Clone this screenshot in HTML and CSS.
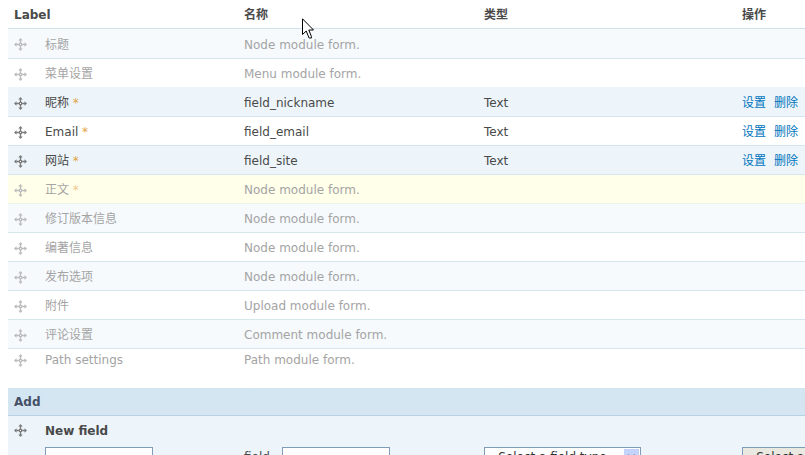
FILE: index.html
```html
<!DOCTYPE html>
<html lang="zh-CN">
<head>
<meta charset="utf-8">
<title>Manage fields</title>
<link rel="stylesheet" href="styles.css">
</head>
<body>
<svg class="defs" aria-hidden="true">
  <symbol id="move" viewBox="0 0 13 13">
    <path d="M6.500 1v11M1 6.500h11" stroke="currentColor" stroke-width="1.400" fill="none"/>
    <path d="M6.500 0l2.200 2.500H4.300zM6.500 13l2.200-2.500H4.300zM0 6.500l2.500-2.200v4.400zM13 6.500l-2.500-2.200v4.400z" fill="currentColor"/>
    <path d="M5 5h3v3H5z" fill="currentColor"/>
    <path d="M6 6h1v1H6z" fill="#fff"/>
  </symbol>
</svg>
<table class="fields">
  <colgroup><col class="c-label"><col class="c-name"><col class="c-type"><col></colgroup>
  <thead>
    <tr><th>Label</th><th>名称</th><th>类型</th><th>操作</th></tr>
  </thead>
  <tbody>
    <tr class="first tint locked"><td><div class="item"><svg><use href="#move"/></svg>标题</div></td><td>Node module form.</td><td></td><td></td></tr>
    <tr class="locked plain"><td><div class="item"><svg><use href="#move"/></svg>菜单设置</div></td><td>Menu module form.</td><td></td><td></td></tr>
    <tr class="odd"><td><div class="item"><svg><use href="#move"/></svg>昵称 <span class="req">*</span></div></td><td>field_nickname</td><td>Text</td><td class="ops"><a href="#">设置</a><a href="#">删除</a></td></tr>
    <tr><td><div class="item"><svg><use href="#move"/></svg>Email <span class="req">*</span></div></td><td>field_email</td><td>Text</td><td class="ops"><a href="#">设置</a><a href="#">删除</a></td></tr>
    <tr class="odd"><td><div class="item"><svg><use href="#move"/></svg>网站 <span class="req">*</span></div></td><td>field_site</td><td>Text</td><td class="ops"><a href="#">设置</a><a href="#">删除</a></td></tr>
    <tr class="changed locked"><td><div class="item"><svg><use href="#move"/></svg>正文 <span class="req">*</span></div></td><td>Node module form.</td><td></td><td></td></tr>
    <tr class="tint locked"><td><div class="item"><svg><use href="#move"/></svg>修订版本信息</div></td><td>Node module form.</td><td></td><td></td></tr>
    <tr class="locked"><td><div class="item"><svg><use href="#move"/></svg>编著信息</div></td><td>Node module form.</td><td></td><td></td></tr>
    <tr class="tint locked"><td><div class="item"><svg><use href="#move"/></svg>发布选项</div></td><td>Node module form.</td><td></td><td></td></tr>
    <tr class="locked"><td><div class="item"><svg><use href="#move"/></svg>附件</div></td><td>Upload module form.</td><td></td><td></td></tr>
    <tr class="tint locked"><td><div class="item"><svg><use href="#move"/></svg>评论设置</div></td><td>Comment module form.</td><td></td><td></td></tr>
    <tr class="last locked"><td><div class="item"><svg><use href="#move"/></svg>Path settings</div></td><td>Path module form.</td><td></td><td></td></tr>
  </tbody>
  <tbody class="add">
    <tr class="region"><th colspan="4">Add</th></tr>
    <tr class="new"><td colspan="4"><div class="item"><svg><use href="#move"/></svg><strong>New field</strong></div></td></tr>
    <tr class="controls">
      <td><div class="entry indent"><input type="text" aria-label="Label"></div></td>
      <td><div class="entry"><label for="fname">field_</label><input id="fname" type="text"></div></td>
      <td><div class="pick"><select aria-label="Field type"><option>- Select a field type -</option></select><span class="arrow"><svg viewBox="0 0 15 17"><path d="M4 6l3.500 3.500L11 6" fill="none" stroke="#4d6185" stroke-width="2"/></svg></span></div></td>
      <td class="clip"><div class="pick widget"><select aria-label="Widget"><option>- Select a widget -</option></select></div></td>
    </tr>
  </tbody>
</table>
<svg class="pointer" viewBox="0 0 12 21" aria-hidden="true"><path d="M.5 .8v15.700l3.700-3.500 2.900 7h2.300v-1.500L6.800 12H11.500z" fill="#fff" stroke="#000"/></svg>
</body>
</html>
```
FILE: styles.css
```css
html {
  overflow: hidden;
}

body {
  margin: 0 0 0 8px;
  background: #fff;
  color: #494949;
  font: 12px/18px "DejaVu Sans", "Noto Sans CJK SC", sans-serif;
}

.defs {
  position: absolute;
  width: 0;
  height: 0;
}

.fields {
  width: 100%;
  table-layout: fixed;
  border-collapse: separate;
  border-spacing: 0;
}

.c-label { width: 230px; }
.c-name { width: 240px; }
.c-type { width: 258px; }

th,
td {
  box-sizing: border-box;
  height: 29px;
  padding: 2px 6px 0;
  text-align: left;
  white-space: nowrap;
  border-bottom: 1px solid #d6e6ef;
}

thead th {
  border-color: #cfe2ec;
}

.first td { height: 30px; }
.plain td { border-color: #edf5fa; }
.odd td { background: #edf5fa; }
.tint td { background: #f6fafd; }

.changed td {
  background: #ffffea;
  border-color: #edf2ed;
}

.locked { color: #a4a4a4; }
.locked .req { color: #ecc890; }

.last td {
  height: 39px;
  vertical-align: top;
  border: 0;
}

.item {
  display: flex;
  align-items: center;
  white-space: pre;
}

.item svg {
  width: 13px;
  height: 13px;
  margin-right: 18px;
  color: #7c7c7c;
}

.locked .item svg { color: #bcbcbc; }

.req { color: #dfa347; }

a {
  color: #0074bd;
  text-decoration: none;
}

.ops { padding-right: 0; }
.ops a + a { margin-left: 8px; }

.region th {
  height: 28px;
  padding-top: 0;
  color: #455067;
  background: linear-gradient(#d2e6f2, #d6e5f2);
  border-color: #b5d3e5;
}

.new td,
.controls td {
  padding-top: 0;
  background: #edf5fb;
  border: 0;
}

.new td {
  height: 31px;
  padding-bottom: 2px;
}

.controls td {
  height: 30px;
  vertical-align: top;
}

.controls .clip {
  padding-right: 0;
  overflow: hidden;
}

.entry {
  display: flex;
  align-items: center;
  gap: 6px;
}

.entry label { line-height: 16px; }

.indent { padding-left: 31px; }

input,
select {
  box-sizing: border-box;
  height: 20px;
  margin: 0;
  border: 1px solid #7f9db9;
  border-radius: 0;
  background: #fff;
  color: #333;
  font: inherit;
}

input { width: 108px; }

.pick {
  position: relative;
  width: 157px;
}

select {
  width: 100%;
  padding: 0 5px;
  appearance: none;
}

.widget select { background: #e9e9e2; }

.arrow {
  position: absolute;
  top: 2px;
  right: 2px;
  width: 15px;
  height: 16px;
  background: #c3d3fb;
  pointer-events: none;
}

.pointer {
  position: absolute;
  top: 18px;
  left: 302px;
  width: 12px;
  height: 21px;
}
```
